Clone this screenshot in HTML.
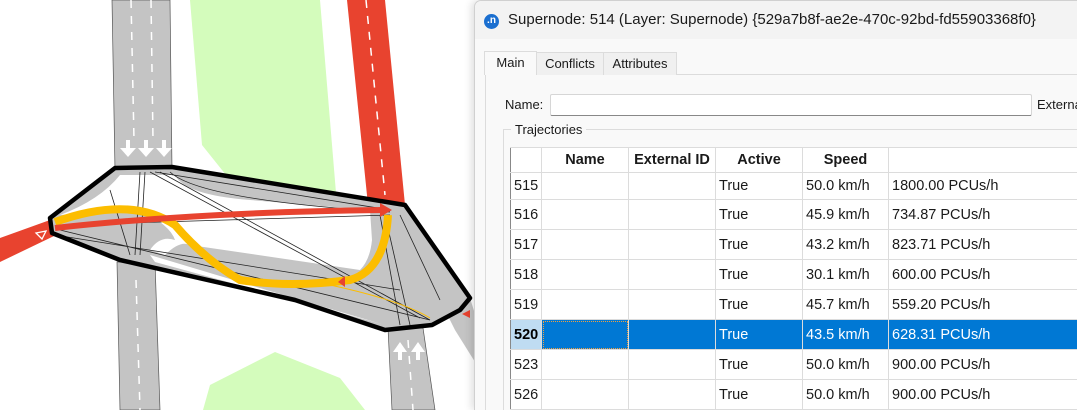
<!DOCTYPE html>
<html style="overflow:hidden;height:410px"><head><meta charset="utf-8"><style>
body{margin:0;width:1077px;height:410px;overflow:hidden;background:#fff;font-family:"Liberation Sans",sans-serif;position:relative}
#map{position:absolute;left:0;top:0}
#dlg{position:absolute;left:474px;top:0;width:603px;height:409px;overflow:hidden;background:#f9f9f9;border-left:1px solid #d0d0d0;border-top:1px solid #d0d0d0;border-top-left-radius:7px;box-shadow:-3px 0 8px rgba(0,0,0,.12);font-size:13px;color:#1a1a1a}
.title{position:absolute;left:0;top:0;width:603px;height:38px;background:#f3f3f3;border-top-left-radius:7px}
.icon{position:absolute;left:9px;top:13px;width:15px;height:15px;border-radius:50%;background:#1b6fd0;color:#fff;font-size:10px;line-height:13px;text-align:center;font-weight:bold}
.ttext{position:absolute;left:33px;top:10px;font-size:15px;color:#1a1a1a}
.tab{position:absolute;top:51px;height:22px;border:1px solid #dcdcdc;border-bottom:none;background:#f0f0f0;font-size:13px;line-height:22px;text-align:center}
.pane{position:absolute;left:10px;top:73px;width:600px;height:340px;border:1px solid #dcdcdc;background:#f9f9f9}
.lbl{position:absolute;font-size:13px}
.input{position:absolute;left:75px;top:93px;width:480px;height:20px;background:#fff;border:1px solid #d6d6d6;border-bottom-color:#888;border-radius:2px}
.gb{position:absolute;left:28px;top:128px;width:590px;height:300px;border:1px solid #dcdcdc}
table{position:absolute;left:35px;top:146px;border-collapse:collapse;table-layout:fixed;width:580px;background:#fff;border-top:1px solid #888;border-left:1px solid #888}
td,th{border:1px solid #dcdcdc;height:29px;padding:0 3px;font-size:14.5px;text-align:left;white-space:nowrap;overflow:hidden}
th{font-weight:bold;text-align:center;height:24px;vertical-align:middle}
tr.first td{height:26px}
td.rh{background:#fff;border-left:none}
tr.sel td{background:#0078d4;color:#fff}
tr.sel td.rh{background:#bfdcf2;color:#000;font-weight:bold}
</style></head><body>
<svg id="map" width="480" height="410" viewBox="0 0 480 410">
<polygon points="190,0 320,0 337,205 250,205 202,145" fill="#d4fcbc"/>
<polygon points="203,410 210,385 275,352 340,378 365,410" fill="#d4fcbc"/>
<polygon points="112,0 170,0 172,170 115,170" fill="#c4c4c4" stroke="#555" stroke-width="0.7"/>
<polygon points="117,262 155,262 160,410 120,410" fill="#c4c4c4" stroke="#555" stroke-width="0.7"/>
<polygon points="347,0 385,0 405,205 368,205" fill="#e8432f"/>
<polygon points="388,328 423,328 435,410 392,410" fill="#c4c4c4" stroke="#555" stroke-width="0.7"/>
<polygon points="440,300 470,298 480,330 480,370 455,330" fill="#c4c4c4"/>
<polygon points="0,238 50,220 54,236 0,262" fill="#e8432f"/>
<polygon points="115,168 172,167 405,205 470,298 432,325 385,330 295,300 120,260 52,233 50,218" fill="#c4c4c4"/>
<path d="M120,175 Q100,200 60,215 L140,210 Q170,225 175,240 Q160,235 150,250 L165,255 Q180,240 190,245 L360,270 Q370,260 372,240 L370,210 L250,200 Q185,195 175,175 Z" fill="#fff"/>
<polygon points="150,255 300,300 385,325 155,262" fill="#fff"/>
<g stroke="#222" stroke-width="0.8" fill="none">
<path d="M140,172 L135,255 M145,172 L140,255 M155,172 L390,210 M160,172 L430,320 M150,172 L420,318 M60,230 L430,320 M60,225 L390,215 M170,172 Q200,200 390,212 M55,235 L400,290 M110,190 L130,255"/>
<path d="M380,215 L400,325 M385,215 L410,325 M400,215 L440,300"/>
</g>
<path d="M55,222 Q130,195 175,225 Q205,260 240,280 Q290,288 350,280 Q385,270 388,215" stroke="#fcbd00" stroke-width="8" fill="none"/>
<path d="M55,228 Q200,212 385,210" stroke="#e8432f" stroke-width="6" fill="none"/>
<polygon points="380,203 392,210 380,217" fill="#e8432f"/>
<path d="M330,285 Q400,300 430,318" stroke="#fcbd00" stroke-width="1" fill="none"/>
<polygon points="115,168 172,167 405,205 470,298 460,310 432,325 385,330 295,300 120,260 52,233 50,218" fill="none" stroke="#000" stroke-width="4.5" stroke-linejoin="round"/>
<g stroke="#fff" stroke-width="1.5" stroke-dasharray="8,8">
<line x1="131" y1="0" x2="134" y2="140"/><line x1="151" y1="0" x2="153" y2="140"/>
<line x1="136" y1="280" x2="140" y2="410"/><line x1="366" y1="0" x2="385" y2="195"/>
<line x1="408" y1="340" x2="413" y2="410"/>
</g>
<g fill="#fff"><path d="M120,148h6v-8h4v8h6l-8,9z"/><path d="M138,148h6v-8h4v8h6l-8,9z"/><path d="M156,148h6v-8h4v8h6l-8,9z"/>
<path d="M393,352h5v8h4v-8h5l-7,-10z"/><path d="M411,352h5v8h4v-8h5l-7,-10z"/></g>
<polygon points="36,233 46,231 42,239" fill="none" stroke="#fff" stroke-width="1.3"/>
<polygon points="338,282 345,276 345,287" fill="#e8432f"/>
<polygon points="470,318 462,314 470,310" fill="#e8432f"/>
</svg>
<div id="dlg">
<div class="title"><div class="icon">.n</div><div class="ttext">Supernode: 514 (Layer: Supernode) {529a7b8f-ae2e-470c-92bd-fd55903368f0}</div></div>
<div class="pane"></div>
<div class="tab" style="left:9px;width:51px;background:#f9f9f9;height:23px;top:50px">Main</div>
<div class="tab" style="left:61px;width:66px">Conflicts</div>
<div class="tab" style="left:128px;width:72px">Attributes</div>
<div class="lbl" style="left:30px;top:96px">Name:</div>
<div class="input"></div>
<div class="lbl" style="left:562px;top:96px">Externa</div>
<div class="gb"></div>
<div class="lbl" style="left:36px;top:121px;background:#f9f9f9;padding:0 4px">Trajectories</div>
<table>
<colgroup><col style="width:31px"><col style="width:87px"><col style="width:87px"><col style="width:87px"><col style="width:86px"><col style="width:202px"></colgroup>
<tr><th style="border-left:none"></th><th>Name</th><th>External ID</th><th>Active</th><th>Speed</th><th></th></tr>
<tr class="first"><td class="rh">515</td><td></td><td></td><td>True</td><td>50.0 km/h</td><td>1800.00 PCUs/h</td></tr>
<tr><td class="rh">516</td><td></td><td></td><td>True</td><td>45.9 km/h</td><td>734.87 PCUs/h</td></tr>
<tr><td class="rh">517</td><td></td><td></td><td>True</td><td>43.2 km/h</td><td>823.71 PCUs/h</td></tr>
<tr><td class="rh">518</td><td></td><td></td><td>True</td><td>30.1 km/h</td><td>600.00 PCUs/h</td></tr>
<tr><td class="rh">519</td><td></td><td></td><td>True</td><td>45.7 km/h</td><td>559.20 PCUs/h</td></tr>
<tr class="sel"><td class="rh">520</td><td style="outline:1px dotted #f0a040;outline-offset:-2px"></td><td></td><td>True</td><td>43.5 km/h</td><td>628.31 PCUs/h</td></tr>
<tr><td class="rh">523</td><td></td><td></td><td>True</td><td>50.0 km/h</td><td>900.00 PCUs/h</td></tr>
<tr><td class="rh">526</td><td></td><td></td><td>True</td><td>50.0 km/h</td><td>900.00 PCUs/h</td></tr>
</table>
</div>
</body></html>
